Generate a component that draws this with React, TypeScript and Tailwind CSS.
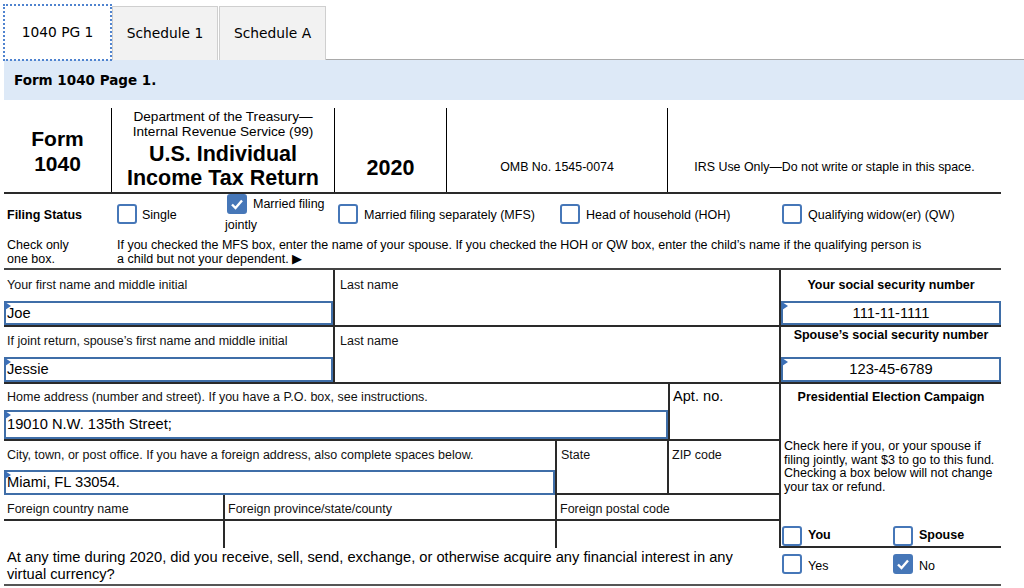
import type { ReactNode } from 'react'

const LINE = 'border-[#2a2a2a]'

function Check({ on = false }: { on?: boolean }) {
  return (
    <span
      className={`inline-flex w-[20px] h-[20px] shrink-0 items-center justify-center rounded-[3px] border-2 border-[#4677b8] ${
        on ? 'bg-[#4677b8]' : 'bg-white'
      }`}
    >
      {on && (
        <svg width="14" height="12" viewBox="0 0 14 12">
          <path d="M2 6.5 L5.5 10 L12 2.5" fill="none" stroke="white" strokeWidth="2.4" />
        </svg>
      )}
    </span>
  )
}

function Field({ value = '', h, center = false }: { value?: string; h: string; center?: boolean }) {
  return (
    <div
      className={`relative w-full ${h} border-2 border-[#3f6ea8] bg-white flex items-center text-[14.7px] text-black ${
        center ? 'justify-center' : 'pl-[1px]'
      }`}
    >
      <svg className="absolute -left-[1px] -top-[1px]" width="6" height="8" viewBox="0 0 6 8">
        <polygon points="0,0 6,4 0,8" fill="#3b6fb6" />
      </svg>
      {value}
    </div>
  )
}

function Label({ children, className = '' }: { children: ReactNode; className?: string }) {
  return <div className={`text-[12.5px] leading-[14px] pl-[3px] text-[#111] ${className}`}>{children}</div>
}

export default function App() {
  return (
    <div className="w-[1024px] h-[588px] overflow-hidden bg-white font-['Liberation_Sans',Arial,sans-serif] text-black">
      {/* tabs */}
      <div className="flex items-end h-[60px] pt-[5px] pl-[4px]">
        <div className="w-[107px] h-[55px] bg-white outline-2 outline-dotted outline-[#4f83cf] -outline-offset-1 flex items-center justify-center font-['DejaVu_Sans',Verdana,sans-serif] text-[13.8px]">
          1040 PG 1
        </div>
        <div className="ml-[1px] w-[106px] h-[54px] bg-[#f2f2f2] border border-[#cfcfcf] border-b-0 flex items-center justify-center font-['DejaVu_Sans',Verdana,sans-serif] text-[13.8px]">
          Schedule 1
        </div>
        <div className="ml-[1px] w-[107px] h-[54px] bg-[#f2f2f2] border border-[#cfcfcf] border-b-0 flex items-center justify-center font-['DejaVu_Sans',Verdana,sans-serif] text-[13.8px]">
          Schedule A
        </div>
        <div className="flex-1 h-[1px] bg-[#a9a9a9]" />
      </div>

      {/* section header */}
      <div className="ml-[4px] h-[40px] bg-[#dde9f7] flex items-center pl-[10px] font-['DejaVu_Sans',Verdana,sans-serif] font-bold text-[13.5px]">
        Form 1040 Page 1.
      </div>

      <div className="ml-[4px] mt-[8px] w-[997px]">
        {/* title row */}
        <div className={`flex h-[86px] border-b-2 ${LINE}`}>
          <div className="w-[108px] border-r border-black flex flex-col items-center justify-center font-bold text-[21px] leading-[25px] pt-[2px]">
            <span>Form</span>
            <span>1040</span>
          </div>
          <div className="w-[223px] border-r border-black flex flex-col items-center pt-[1px]">
            <span className="text-[13.6px] leading-[15px] whitespace-nowrap">Department of the Treasury—</span>
            <span className="text-[13.6px] leading-[15px] whitespace-nowrap">Internal Revenue Service (99)</span>
            <span className="mt-[3px] font-bold text-[21.5px] leading-[24px] whitespace-nowrap">U.S. Individual</span>
            <span className="font-bold text-[21.5px] leading-[24px] whitespace-nowrap">Income Tax Return</span>
          </div>
          <div className="w-[112px] border-r border-black flex items-end justify-center pb-[12px] font-bold text-[21.5px] leading-[24px]">
            2020
          </div>
          <div className="w-[221px] border-r border-black flex items-end justify-center pb-[18px] text-[12.4px] leading-[14px]">
            OMB No. 1545-0074
          </div>
          <div className="flex-1 flex items-end justify-center pb-[18px] text-[12.4px] leading-[14px]">
            IRS Use Only—Do not write or staple in this space.
          </div>
        </div>

        {/* filing status */}
        <div className="h-[76px] border-b-2 border-[#444]">
          <div className="flex h-[42px] text-[12.5px] leading-[14px]">
            <div className="w-[113px] pl-[3px] pt-[14px] font-bold">Filing Status</div>
            <div className="w-[108px] pt-[10px] flex items-start gap-[5px]">
              <Check />
              <span className="mt-[4px]">Single</span>
            </div>
            <div className="w-[113px]">
              <div className="flex items-center gap-[6px] ml-[2px]">
                <Check on />
                <span>Married filing</span>
              </div>
              <div className="mt-[4px]">jointly</div>
            </div>
            <div className="w-[222px] pt-[10px] flex items-start gap-[6px]">
              <Check />
              <span className="mt-[4px]">Married filing separately (MFS)</span>
            </div>
            <div className="w-[222px] pt-[10px] flex items-start gap-[6px]">
              <Check />
              <span className="mt-[4px]">Head of household (HOH)</span>
            </div>
            <div className="flex-1 pt-[10px] flex items-start gap-[6px]">
              <Check />
              <span className="mt-[4px]">Qualifying widow(er) (QW)</span>
            </div>
          </div>
          <div className="flex pt-[2px] text-[12.5px] leading-[14px]">
            <div className="w-[113px] pl-[3px]">
              Check only
              <br />
              one box.
            </div>
            <div className="flex-1">
              If you checked the MFS box, enter the name of your spouse. If you checked the HOH or QW box, enter the child’s name if the qualifying person is
              <br />a child but not your dependent. ▶
            </div>
          </div>
        </div>

        {/* names / address */}
        <div className="flex">
          <div className="w-[775px]">
            <div className={`flex h-[57px] border-b-2 ${LINE}`}>
              <div className={`w-[331px] border-r-2 ${LINE}`}>
                <Label className="pt-[8px]">Your first name and middle initial</Label>
                <div className="mt-[9px]">
                  <Field value="Joe" h="h-[24px]" />
                </div>
              </div>
              <div className="flex-1 pl-[2px]">
                <Label className="pt-[8px]">Last name</Label>
              </div>
            </div>
            <div className={`flex h-[57px] border-b-2 ${LINE}`}>
              <div className={`w-[331px] border-r-2 ${LINE}`}>
                <Label className="pt-[7px]">If joint return, spouse’s first name and middle initial</Label>
                <div className="mt-[9px]">
                  <Field value="Jessie" h="h-[25px]" />
                </div>
              </div>
              <div className="flex-1 pl-[2px]">
                <Label className="pt-[7px]">Last name</Label>
              </div>
            </div>
            <div className={`flex h-[57px] border-b-2 ${LINE}`}>
              <div className={`w-[666px] border-r-2 ${LINE}`}>
                <Label className="pt-[6px]">Home address (number and street). If you have a P.O. box, see instructions.</Label>
                <div className="mt-[6px]">
                  <Field value="19010 N.W. 135th Street;" h="h-[29px]" />
                </div>
              </div>
              <div className="flex-1 pl-[3px] pt-[4px] text-[14.6px] leading-[17px]">Apt. no.</div>
            </div>
            <div className={`flex h-[54px] border-b-2 ${LINE}`}>
              <div className={`w-[553px] border-r-2 ${LINE}`}>
                <Label className="pt-[7px]">City, town, or post office. If you have a foreign address, also complete spaces below.</Label>
                <div className="mt-[8px]">
                  <Field value="Miami, FL 33054." h="h-[25px]" />
                </div>
              </div>
              <div className={`w-[112px] border-r-2 ${LINE}`}>
                <Label className="pt-[7px] pl-[4px]">State</Label>
              </div>
              <div className="flex-1">
                <Label className="pt-[7px]">ZIP code</Label>
              </div>
            </div>
            <div className="flex h-[53px]">
              <div className={`w-[221px] border-r-2 ${LINE}`}>
                <Label className={`h-[26px] pt-[7px] border-b-2 ${LINE}`}>Foreign country name</Label>
              </div>
              <div className={`w-[332px] border-r-2 ${LINE}`}>
                <Label className={`h-[26px] pt-[7px] border-b-2 ${LINE}`}>Foreign province/state/county</Label>
              </div>
              <div className="flex-1">
                <Label className={`h-[26px] pt-[7px] border-b-2 ${LINE}`}>Foreign postal code</Label>
              </div>
            </div>
          </div>

          {/* right column */}
          <div className={`w-[222px] border-l-2 ${LINE}`}>
            <div className={`h-[57px] border-b-2 ${LINE}`}>
              <div className="pt-[8px] text-center font-bold text-[12.5px] leading-[14px]">Your social security number</div>
              <div className="mt-[9px]">
                <Field value="111-11-1111" h="h-[24px]" center />
              </div>
            </div>
            <div className={`h-[57px] border-b-2 ${LINE}`}>
              <div className="pt-[1px] text-center font-bold text-[12.5px] leading-[14px]">Spouse’s social security number</div>
              <div className="mt-[15px]">
                <Field value="123-45-6789" h="h-[25px]" center />
              </div>
            </div>
            <div className={`h-[164px] border-b-2 ${LINE}`}>
              <div className="pt-[6px] text-center font-bold text-[12.5px] leading-[14px]">Presidential Election Campaign</div>
              <p className="mt-[36px] pl-[3px] text-[12.5px] leading-[13.7px]">
                Check here if you, or your spouse if
                <br />
                filing jointly, want $3 to go to this fund.
                <br />
                Checking a box below will not change
                <br />
                your tax or refund.
              </p>
              <div className="mt-[31px] flex pl-[1px] text-[12.5px] font-bold">
                <div className="w-[111px] flex items-center gap-[6px]">
                  <Check />
                  <span>You</span>
                </div>
                <div className="flex items-center gap-[6px]">
                  <Check />
                  <span>Spouse</span>
                </div>
              </div>
            </div>
          </div>
        </div>

        {/* virtual currency */}
        <div className="flex h-[38px] border-b-2 border-[#555]">
          <div className="w-[775px] pl-[3px] pt-[1px] text-[14.7px] leading-[17px]">
            At any time during 2020, did you receive, sell, send, exchange, or otherwise acquire any financial interest in any
            <br />
            virtual currency?
          </div>
          <div className="flex-1 flex pl-[3px] pt-[6px] text-[12.5px]">
            <div className="w-[111px] flex items-start gap-[6px]">
              <Check />
              <span className="mt-[3px]">Yes</span>
            </div>
            <div className="flex items-start gap-[6px]">
              <Check on />
              <span className="mt-[3px]">No</span>
            </div>
          </div>
        </div>
      </div>
    </div>
  )
}
